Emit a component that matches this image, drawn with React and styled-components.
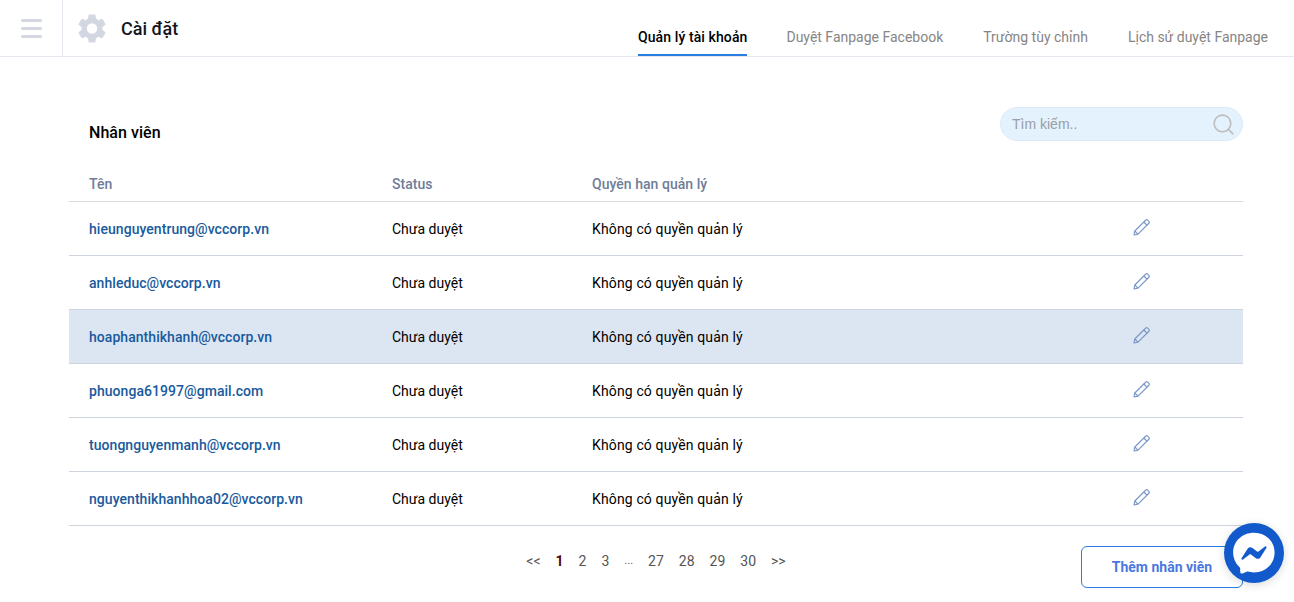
import styled, { createGlobalStyle } from "styled-components";
import { Search } from "lucide-react";

const GlobalStyle = createGlobalStyle`
  html, body {
    margin: 0;
    padding: 0;
    background: #fff;
    font-family: Roboto, "Liberation Sans", sans-serif;
  }
  * {
    box-sizing: border-box;
  }
`;

const Page = styled.div`
  position: relative;
  width: 1294px;
  height: 602px;
  overflow: hidden;
`;

const Header = styled.header`
  display: flex;
  align-items: stretch;
  height: 57px;
  border-bottom: 1px solid #e6e8ef;
`;

const MenuCell = styled.div`
  display: flex;
  flex-direction: column;
  justify-content: center;
  gap: 5px;
  width: 63px;
  padding: 0 21px;
  border-right: 1px solid #e6e8ef;
`;

const MenuBar = styled.span`
  display: block;
  height: 3px;
  width: 21px;
  border-radius: 2px;
  background: #d3d7e1;
`;

const PageTitle = styled.div`
  display: flex;
  align-items: center;
  gap: 15px;
  padding-left: 15px;
  font-size: 18px;
  font-weight: 500;
  color: #14161f;
`;

const Tabs = styled.nav`
  display: flex;
  gap: 40px;
  margin-left: auto;
  padding-right: 26px;
`;

const Tab = styled.a`
  display: flex;
  align-items: center;
  height: 56px;
  padding-top: 20px;
  margin-right: ${(p) => (p.$active ? "-1px" : "0")};
  font-size: 14px;
  font-weight: ${(p) => (p.$active ? 500 : 400)};
  letter-spacing: ${(p) => (p.$active ? "0.1px" : "0")};
  color: ${(p) => (p.$active ? "#000" : "#858585")};
  border-bottom: 2px solid ${(p) => (p.$active ? "#2a7de1" : "transparent")};
`;

const Main = styled.main`
  padding: 50px 51px 0 69px;
`;

const TopRow = styled.div`
  display: flex;
  align-items: center;
  justify-content: space-between;
  height: 34px;
  padding-left: 20px;
`;

const SectionTitle = styled.h2`
  margin: 16px 0 0;
  font-size: 16px;
  font-weight: 500;
  letter-spacing: 0.05px;
  color: #000;
`;

const SearchBox = styled.div`
  display: flex;
  align-items: center;
  justify-content: space-between;
  width: 243px;
  height: 34px;
  padding: 0 6px 0 11px;
  border-radius: 17px;
  border: 1px solid #dcebf7;
  background: #e3f2fd;
  font-family: "Liberation Sans", Arial, sans-serif;
  font-size: 14px;
  color: #9a9ea6;
`;

const Row = styled.div`
  display: grid;
  grid-template-columns: 303px 200px 541px 1fr;
  align-items: center;
  height: ${(p) => (p.$head ? "61px" : "54px")};
  padding-left: 20px;
  padding-top: ${(p) => (p.$head ? "26px" : "0")};
  border-bottom: 1px solid ${(p) => (p.$head ? "#d9d9d9" : "#ced4de")};
  background: ${(p) => (p.$selected ? "#dce6f2" : "transparent")};
  font-size: 14px;
  color: #000;
`;

const HeadCell = styled.div`
  font-weight: 500;
  letter-spacing: 0.04px;
  color: #6f7d99;
`;

const Email = styled.a`
  font-weight: 500;
  letter-spacing: 0.05px;
  color: #185a9d;
`;

const Permission = styled.div`
  letter-spacing: 0.14px;
`;

const EditButton = styled.span`
  display: flex;
  margin-top: -2px;
  color: #7b98c6;
`;

const Footer = styled.div`
  position: relative;
  display: flex;
  justify-content: center;
  padding: 20px 0 0 0;
`;

const Pagination = styled.div`
  display: flex;
  gap: 15px;
  height: 30px;
  align-items: flex-start;
  font-size: 14px;
  line-height: 30px;
  color: #555;
`;

const PageLink = styled.a`
  font-size: ${(p) => (p.$small ? "11px" : "14px")};
  font-weight: ${(p) => (p.$current ? 700 : 400)};
  color: ${(p) => (p.$current ? "#4a0a12" : "#555")};
`;

const AddButton = styled.button`
  position: absolute;
  right: 0;
  top: 20px;
  width: 162px;
  height: 42px;
  border: 1px solid #2a7de1;
  border-radius: 6px;
  background: #fff;
  font-family: inherit;
  font-size: 14px;
  font-weight: 700;
  color: #4a78e0;
`;

const ChatBubble = styled.div`
  position: absolute;
  left: 1224px;
  top: 523px;
  width: 60px;
  height: 60px;
  border-radius: 50%;
  background: #1259cc;
  box-shadow: 0 2px 10px rgba(0, 0, 0, 0.15);
  display: flex;
  align-items: center;
  justify-content: center;
`;

const tabs = ["Quản lý tài khoản", "Duyệt Fanpage Facebook", "Trường tùy chỉnh", "Lịch sử duyệt Fanpage"];

const staff = [
  "hieunguyentrung@vccorp.vn",
  "anhleduc@vccorp.vn",
  "hoaphanthikhanh@vccorp.vn",
  "phuonga61997@gmail.com",
  "tuongnguyenmanh@vccorp.vn",
  "nguyenthikhanhhoa02@vccorp.vn",
];

const GearIcon = () => (
  <svg width="28" height="29" viewBox="2.5 2 19 20" fill="#d3d7e1">
    <path d="M19.14 12.94c.04-.3.06-.61.06-.94s-.02-.64-.07-.94l2.03-1.58a.49.49 0 0 0 .12-.61l-1.92-3.32a.49.49 0 0 0-.59-.22l-2.39.96a7 7 0 0 0-1.62-.94l-.36-2.54a.48.48 0 0 0-.48-.41h-3.84a.48.48 0 0 0-.47.41l-.36 2.54c-.59.24-1.13.57-1.62.94l-2.39-.96a.48.48 0 0 0-.59.22L2.73 8.87a.47.47 0 0 0 .12.61l2.03 1.58c-.05.3-.08.62-.08.94s.02.64.07.94l-2.03 1.58a.49.49 0 0 0-.12.61l1.92 3.32c.12.22.37.29.59.22l2.39-.96c.5.38 1.03.7 1.62.94l.36 2.54c.05.24.24.41.48.41h3.84c.24 0 .44-.17.47-.41l.36-2.54c.59-.24 1.13-.56 1.62-.94l2.39.96c.22.08.47 0 .59-.22l1.92-3.32a.47.47 0 0 0-.12-.61l-2.01-1.58zM12 15.6A3.6 3.6 0 1 1 12 8.4a3.6 3.6 0 0 1 0 7.2z" />
  </svg>
);

const PencilIcon = () => (
  <svg width="17" height="17" viewBox="0 0 17 17" fill="none" stroke="currentColor" strokeWidth="1.2" strokeLinejoin="round">
    <path d="M1 16l.8-4L11.800 2l.9-.9a1.400 1.400 0 0 1 2 0l1.200 1.200a1.400 1.400 0 0 1 0 2L5 15.200z" />
    <path d="M10.800 3l3.200 3.200M1.800 12L5 15.200" />
  </svg>
);

const MessengerIcon = () => (
  <svg width="50" height="50" viewBox="0 0 48 48">
    <path
      fill="#fff"
      d="M24 4.5C12.7 4.5 4 12.7 4 23.6c0 5.7 2.4 10.6 6.2 14 .3.3.5.7.5 1.1l.1 3.5c0 1.1 1.2 1.8 2.2 1.4l3.9-1.7c.3-.2.7-.2 1-.1 1.8.5 3.8.8 5.9.8 11.3 0 20-8.200 20-19S35.300 4.500 24 4.500z"
    />
    <path
      fill="#1259cc"
      d="M12 29.100l5.900-9.300c.9-1.500 2.900-1.900 4.300-.8l4.700 3.500c.4.300 1 .3 1.400 0l6.300-4.800c.8-.6 1.900.4 1.400 1.200l-5.900 9.300c-.9 1.500-2.900 1.900-4.300.8l-4.700-3.500c-.4-.3-1-.3-1.400 0l-6.300 4.800c-.8.600-1.900-.4-1.400-1.200z"
    />
  </svg>
);

export default function App() {
  return (
    <Page>
      <GlobalStyle />
      <Header>
        <MenuCell>
          <MenuBar />
          <MenuBar />
          <MenuBar />
        </MenuCell>
        <PageTitle>
          <GearIcon />
          Cài đặt
        </PageTitle>
        <Tabs>
          {tabs.map((tab, i) => (
            <Tab key={tab} $active={i === 0}>
              {tab}
            </Tab>
          ))}
        </Tabs>
      </Header>
      <Main>
        <TopRow>
          <SectionTitle>Nhân viên</SectionTitle>
          <SearchBox>
            Tìm kiếm..
            <Search size={25} color="#bdbdbd" strokeWidth={1.5} />
          </SearchBox>
        </TopRow>
        <Row $head>
          <HeadCell>Tên</HeadCell>
          <HeadCell>Status</HeadCell>
          <HeadCell>Quyền hạn quản lý</HeadCell>
        </Row>
        {staff.map((email, i) => (
          <Row key={email} $selected={i === 2}>
            <Email>{email}</Email>
            <div>Chưa duyệt</div>
            <Permission>Không có quyền quản lý</Permission>
            <EditButton>
              <PencilIcon />
            </EditButton>
          </Row>
        ))}
        <Footer>
          <Pagination>
            <PageLink>&lt;&lt;</PageLink>
            <PageLink $current>1</PageLink>
            <PageLink>2</PageLink>
            <PageLink>3</PageLink>
            <PageLink $small>...</PageLink>
            <PageLink>27</PageLink>
            <PageLink>28</PageLink>
            <PageLink>29</PageLink>
            <PageLink>30</PageLink>
            <PageLink>&gt;&gt;</PageLink>
          </Pagination>
          <AddButton>Thêm nhân viên</AddButton>
        </Footer>
      </Main>
      <ChatBubble>
        <MessengerIcon />
      </ChatBubble>
    </Page>
  );
}
